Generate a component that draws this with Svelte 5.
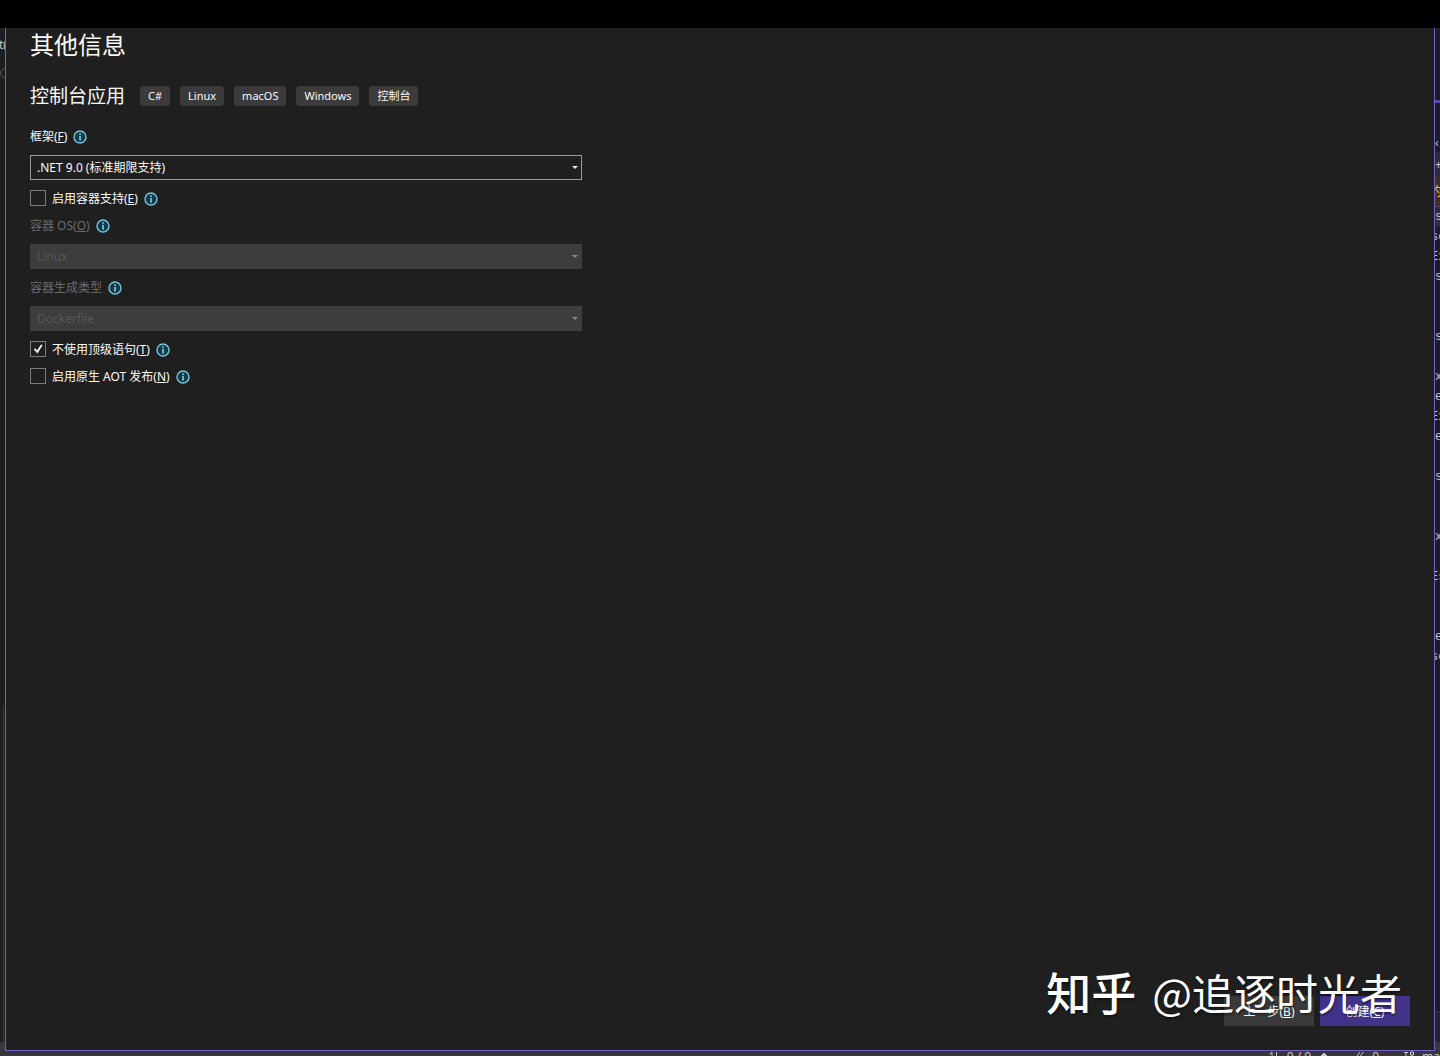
<script lang="ts">
  let framework = $state('net9');
  let containerSupport = $state(false);
  let containerOs = $state('linux');
  let buildType = $state('dockerfile');
  let noTopLevel = $state(true);
  let nativeAot = $state(false);

  const tags = ['C#', 'Linux', 'macOS', 'Windows', '控制台'];

  // visible edge of the editor behind the dialog, one entry per line
  const codeLines = [
    's', 'se', 'Ex', 's', '', '', 's', '', 'x', 'e', 'Ex', 'e', '',
    's', '', '', 'x', '', 'Es', '', '', 'e', 'se'
  ];
</script>

{#snippet info()}
  <svg class="info" viewBox="0 0 14 14" role="img" aria-label="info">
    <circle cx="7" cy="7" r="6" fill="#123c4c" stroke="#7cc4dc" stroke-width="1.4" />
    <rect x="6.3" y="3.2" width="1.5" height="1.6" fill="#8fd4ea" />
    <rect x="6.3" y="5.8" width="1.5" height="4.8" fill="#8fd4ea" />
  </svg>
{/snippet}

<div class="window">
  <div class="top-bar"></div>

  <div class="workspace">
    <div class="edge edge-left">
      <span class="edge-tab">t(</span>
      <span class="edge-search"></span>
      <span class="edge-panel"></span>
      <span class="edge-status"></span>
    </div>

    <main class="dialog">
      <h1>其他信息</h1>

      <div class="project">
        <h2>控制台应用</h2>
        <ul class="tags">
          {#each tags as tag}
            <li>{tag}</li>
          {/each}
        </ul>
      </div>

      <form id="options" class="options" onsubmit={(e) => e.preventDefault()}>
        <div class="row">
          <label for="framework">框架(<u>F</u>)</label>
          {@render info()}
        </div>
        <div class="select">
          <select id="framework" bind:value={framework}>
            <option value="net9">.NET 9.0 (标准期限支持)</option>
          </select>
        </div>

        <div class="row">
          <input id="container" type="checkbox" bind:checked={containerSupport} />
          <label for="container">启用容器支持(<u>E</u>)</label>
          {@render info()}
        </div>

        <div class="row" class:disabled={!containerSupport}>
          <label for="os">容器 OS(<u>O</u>)</label>
          {@render info()}
        </div>
        <div class="select">
          <select id="os" bind:value={containerOs} disabled={!containerSupport}>
            <option value="linux">Linux</option>
          </select>
        </div>

        <div class="row" class:disabled={!containerSupport}>
          <label for="build">容器生成类型</label>
          {@render info()}
        </div>
        <div class="select">
          <select id="build" bind:value={buildType} disabled={!containerSupport}>
            <option value="dockerfile">Dockerfile</option>
          </select>
        </div>

        <div class="row">
          <input id="toplevel" type="checkbox" bind:checked={noTopLevel} />
          <label for="toplevel">不使用顶级语句(<u>T</u>)</label>
          {@render info()}
        </div>
        <div class="row">
          <input id="aot" type="checkbox" bind:checked={nativeAot} />
          <label for="aot">启用原生 AOT 发布(<u>N</u>)</label>
          {@render info()}
        </div>
      </form>

      <footer class="actions">
        <button type="button">上一步(<u>B</u>)</button>
        <button type="submit" form="options" class="primary">创建(<u>C</u>)</button>
      </footer>
    </main>

    <div class="edge edge-right">
      <span class="edge-head"></span>
      <span class="edge-toolbar">‹</span>
      <span class="edge-plus">+</span>
      <span class="edge-notice">约</span>
      <div class="code">
        {#each codeLines as line}
          <div class="code-line" class:cut={line.length > 1}>{line}</div>
        {/each}
      </div>
      <span class="edge-output"></span>
      <span class="edge-status"></span>
    </div>
  </div>

  <div class="status-bar">
    <div class="status-item">
      <svg viewBox="0 0 10 12"><path d="M0.5 3.5 3 1v11M7.5 1v10" /></svg>
      <span>0 / 0</span>
      <svg viewBox="0 0 10 12"><path d="M5 2 8 5 5 8 2 5Z" class="solid" /></svg>
    </div>
    <div class="status-item">
      <svg viewBox="0 0 10 12"><path d="M1 8 6 1M4 8 9.500 1" /></svg>
      <span>0</span>
    </div>
    <div class="status-item">
      <svg viewBox="0 0 10 12"><path d="M0 1.500h4M2 1.500v8M6.500 1h3v3h-3zM8 4v4" /></svg>
      <span>ma</span>
    </div>
  </div>

  <div class="watermark"><b>知乎</b><span>@追逐时光者</span></div>
</div>

<style>
  :global(body) {
    background: #1f1f1f;
  }

  .window {
    position: relative;
    display: flex;
    flex-direction: column;
    min-height: 100vh;
    overflow: hidden;
    color: #fafafa;
    font: 12px/17px 'Noto Sans', 'Noto Sans CJK SC', sans-serif;
  }

  .top-bar {
    height: 28px;
    background: #000;
  }

  .workspace {
    display: flex;
    flex: 1;
  }

  .dialog {
    display: flex;
    flex: 1;
    flex-direction: column;
    padding: 1px 24px 24px;
    background: #1f1f1f;
    border: 1px solid #7160c8;
    border-top: 0;
  }

  h1,
  h2 {
    margin: 0;
    font-weight: 400;
  }

  h1 {
    font-size: 24px;
    line-height: 32px;
  }

  h2 {
    font-size: 19px;
    line-height: 28px;
  }

  .project {
    display: flex;
    align-items: center;
    gap: 15px;
    margin: 21px 0 18px;
  }

  .tags {
    display: flex;
    gap: 10px;
    margin: 0;
    padding: 0;
    list-style: none;
  }

  .tags li {
    padding: 0 8px;
    border-radius: 3px;
    background: #3b3b3b;
    font-size: 11px;
    line-height: 20px;
  }

  .options {
    display: flex;
    flex-direction: column;
    gap: 10px;
    max-width: 552px;
  }

  .row {
    display: flex;
    align-items: center;
    gap: 6px;
    height: 17px;
  }

  .row.disabled label {
    color: #6b6b6b;
  }

  u {
    text-underline-offset: 1px;
  }

  .info {
    width: 14px;
    height: 14px;
  }

  .select {
    position: relative;
    display: flex;
  }

  .select::after {
    content: '';
    position: absolute;
    top: 11px;
    right: 4px;
    border: 3px solid transparent;
    border-top-color: #e8e8e8;
    border-bottom: 0;
    pointer-events: none;
  }

  .select:has(:disabled)::after {
    border-top-color: #8a8a8a;
  }

  select {
    appearance: none;
    flex: 1;
    height: 25px;
    padding: 0 6px;
    border: 1px solid #9a9a9a;
    border-radius: 0;
    background: #1f1f1f;
    color: #fafafa;
    font: inherit;
  }

  select:disabled {
    border-color: #3d3d3d;
    background: #3d3d3d;
    color: #575757;
    opacity: 1;
  }

  input[type='checkbox'] {
    appearance: none;
    display: grid;
    place-items: center;
    align-self: flex-start;
    width: 16px;
    height: 16px;
    margin: 0;
    border: 1px solid #7c7c7c;
    background: #1f1f1f;
  }

  input[type='checkbox']:checked::before {
    content: '';
    width: 10px;
    height: 10px;
    background: #fafafa;
    clip-path: polygon(8% 52%, 24% 42%, 40% 64%, 80% 4%, 96% 12%, 44% 94%);
  }

  .actions {
    display: flex;
    justify-content: flex-end;
    gap: 6px;
    margin-top: auto;
  }

  button {
    width: 90px;
    height: 30px;
    padding: 0;
    border: 0;
    background: #3a3a3a;
    color: #fafafa;
    font: inherit;
  }

  button.primary {
    background: #41338a;
  }

  /* slivers of the IDE on both sides of the dialog */
  .edge {
    display: flex;
    flex-direction: column;
    width: 5px;
    overflow: hidden;
    background: #1d1d22;
    color: #c8c8c8;
    white-space: nowrap;
  }

  .edge-tab {
    margin: 8px 0 0 -1px;
  }

  .edge-search {
    align-self: flex-start;
    width: 10px;
    height: 10px;
    margin-top: 15px;
    border: 1px solid #55555c;
    border-radius: 50%;
    box-sizing: border-box;
  }

  .edge-panel {
    flex: 1;
    margin: 628px 0 0 3px;
    border-left: 1px solid #34343c;
  }

  .edge-status {
    height: 9px;
    background: #38383f;
  }

  .edge-head {
    height: 72px;
    border-bottom: 3px solid #5a48b0;
  }

  .edge-toolbar {
    height: 49px;
    line-height: 80px;
  }

  .edge-plus {
    height: 25px;
    background: #2d2d33;
    line-height: 25px;
  }

  .edge-notice {
    height: 29px;
    margin-left: -5px;
    background: #46301a;
    color: #f0cf96;
    line-height: 29px;
  }

  .code {
    border-top: 1px solid #4a4a52;
    font: 12px/20px 'Liberation Mono', monospace;
  }

  .code-line {
    height: 20px;
  }

  .code-line.cut {
    margin-left: -4px;
  }

  .code-line:first-child {
    background: #2d2d33;
  }

  .edge-output {
    height: 30px;
    margin-top: auto;
    border-top: 1px solid #38383f;
    background: #232329;
  }

  .status-bar {
    display: flex;
    justify-content: flex-end;
    gap: 25px;
    height: 5px;
    overflow: hidden;
    background: #38353b;
    color: #c8c8c8;
    line-height: 12px;
  }

  .status-item {
    display: flex;
    gap: 8px;
  }

  .status-item svg {
    width: 10px;
    height: 12px;
    fill: none;
    stroke: #c8c8c8;
  }

  .status-item .solid {
    fill: #c8c8c8;
  }

  .watermark {
    position: absolute;
    right: 38px;
    bottom: 34px;
    display: flex;
    gap: 16px;
    color: #fff;
    font: 42px/60px 'Noto Sans CJK SC', sans-serif;
    text-shadow: 1px 2px 2px rgba(0, 0, 0, 0.4);
    pointer-events: none;
  }

  .watermark b {
    font-size: 45px;
    font-weight: 500;
  }
</style>
